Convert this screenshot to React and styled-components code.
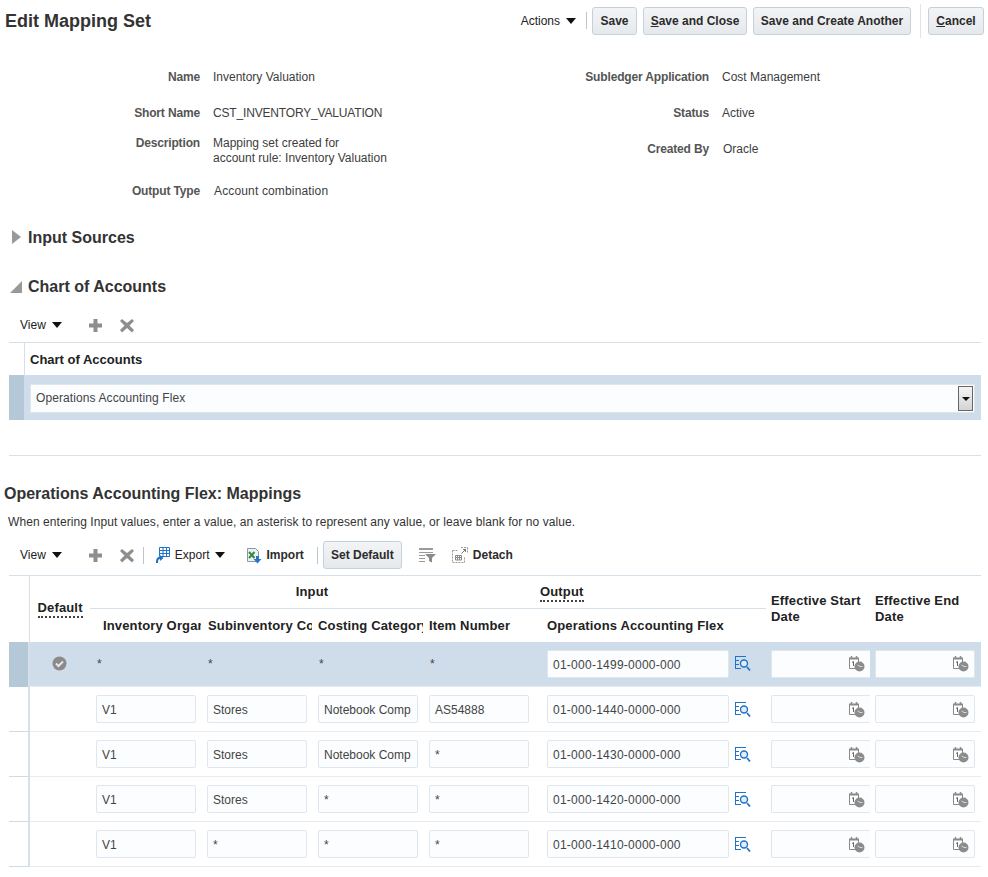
import React from 'react'
import styled, { createGlobalStyle } from 'styled-components'

const GlobalStyle = createGlobalStyle`
  html, body {
    margin: 0;
    padding: 0;
    background: #fff;
    overflow: hidden;
  }
  body {
    font-family: "Liberation Sans", Arial, sans-serif;
    font-size: 12px;
    color: #333;
  }
`

const Page = styled.div`
  width: 988px;
  height: 877px;
  overflow: hidden;
`

/* page header */
const Header = styled.div`
  display: flex;
  align-items: center;
  height: 40px;
  padding: 1px 4px 0 5px;
  box-sizing: border-box;
`

const Title = styled.h1`
  flex: 1;
  margin: 0;
  font-size: 18px;
  line-height: 20px;
  font-weight: bold;
  color: #333;
`

const Menu = styled.span`
  display: inline-flex;
  align-items: center;
  gap: 6px;
  color: #222;
`

const Caret = styled.span`
  display: inline-block;
  width: 0;
  height: 0;
  margin-left: ${p => p.$ml || 0}px;
  border-left: 5px solid transparent;
  border-right: 5px solid transparent;
  border-top: 6px solid #111;
`

const Divider = styled.span`
  display: block;
  width: 1px;
  height: ${p => p.$h || 17}px;
  background: ${p => p.$light ? '#dfe5ea' : '#b9c6d2'};
  margin-left: ${p => p.$ml || 0}px;
  margin-right: ${p => p.$mr || 0}px;
`

const Button = styled.button`
  height: 28px;
  margin-left: ${p => p.$ml || 0}px;
  padding: 0;
  width: ${p => p.$w}px;
  font: bold 12px "Liberation Sans", Arial, sans-serif;
  color: #2b2b2b;
  border: 1px solid #c5d0da;
  border-radius: 3px;
  background: linear-gradient(#f2f4f6, #e6e9ec);
  u { text-decoration: underline; }
`

/* read only form */
const Form = styled.div`
  display: grid;
  grid-template-columns: 509px 1fr;
  padding-top: 30px;
  height: 160px;
`

const Column = styled.div`
  display: flex;
  flex-direction: column;
`

const Field = styled.div`
  display: grid;
  grid-template-columns: ${p => p.$label}px 1fr;
  column-gap: ${p => p.$gap || 13}px;
  margin-top: ${p => p.$top || 0}px;
  line-height: 15px;
`

const Label = styled.div`
  text-align: right;
  font-weight: bold;
  letter-spacing: -0.15px;
  color: #555;
`

const Value = styled.div`
  position: relative;
  color: #3d3d3d;
  letter-spacing: ${p => p.$track || 0}px;
`

const Grip = styled.span`
  position: absolute;
  left: 164px;
  top: 27px;
  width: 8px;
  height: 5px;
  background-image: radial-gradient(#b5b5b5 40%, transparent 45%);
  background-size: 2px 2px;
`

/* collapsible sections */
const Section = styled.div`
  display: flex;
  align-items: center;
  height: 20px;
  margin-top: ${p => p.$top}px;
  font-size: 16px;
  font-weight: bold;
  color: #333;
`

const Disclosure = styled.span`
  width: 28px;
  display: flex;
  padding-left: ${p => p.$open ? 10 : 12}px;
  box-sizing: border-box;
`

const ClosedArrow = styled.span`
  width: 0;
  height: 0;
  border-top: 7px solid transparent;
  border-bottom: 7px solid transparent;
  border-left: 9px solid #999;
  margin-top: -3px;
`

const OpenArrow = styled.span`
  width: 0;
  height: 0;
  border-left: 12px solid transparent;
  border-bottom: 12px solid #999;
  margin-top: -1px;
`

/* toolbars */
const Toolbar = styled.div`
  display: flex;
  align-items: center;
  height: 28px;
  margin-top: ${p => p.$top}px;
  padding-left: 20px;
  color: #222;
`

const ToolText = styled.span`
  margin-left: ${p => p.$ml || 0}px;
  font-weight: ${p => p.$bold ? 'bold' : 'normal'};
  color: ${p => p.$bold ? '#2b2b2b' : '#222'};
`

const ToolIcon = styled.svg`
  display: block;
  flex: none;
  margin-left: ${p => p.$ml || 0}px;
`

/* chart of accounts table */
const ChartTable = styled.div`
  margin: 3px 7px 0 9px;
  border-top: 1px solid #d6e0e8;
`

const ChartHead = styled.div`
  height: 32px;
  margin-left: 15px;
  padding-left: 5px;
  border-left: 1px solid #d6e0e8;
  display: flex;
  align-items: center;
  font-size: 13px;
  font-weight: bold;
  color: #222;
`

const ChartRow = styled.div`
  display: flex;
  height: 45px;
  background: #cfdcea;
`

const RowMarker = styled.div`
  flex: none;
  width: 15px;
  background: #b4c8d8;
`

const ChoiceBox = styled.div`
  flex: 1;
  height: 27px;
  margin: 9px 6px 0 6px;
  padding-left: 5px;
  background: #fbfdff;
  border: 1px solid #dfe7ee;
  display: flex;
  align-items: center;
  justify-content: space-between;
  color: #444;
`

const ChoiceText = styled.span`
  padding-bottom: 2px;
  letter-spacing: 0.1px;
`

const ChoiceButton = styled.span`
  width: 15px;
  height: 25px;
  border: 1px solid #666;
  box-sizing: border-box;
  background: linear-gradient(#f4f4f4, #d4d4d4);
  display: flex;
  align-items: center;
  justify-content: center;
  margin-right: 1px;
`

const SmallCaret = styled.span`
  width: 0;
  height: 0;
  border-left: 4px solid transparent;
  border-right: 4px solid transparent;
  border-top: 4px solid #111;
`

const Rule = styled.div`
  margin: 35px 7px 0 9px;
  border-top: 1px solid #d9e1e8;
`

const MappingsTitle = styled.h2`
  margin: 28px 0 0 4px;
  font-size: 16px;
  line-height: 20px;
  font-weight: bold;
  color: #333;
`

const Hint = styled.p`
  margin: 11px 0 0 8px;
  line-height: 15px;
  letter-spacing: 0.07px;
  color: #333;
`

/* mappings table */
const Table = styled.table`
  width: 972px;
  margin: 6px 0 0 9px;
  border-collapse: collapse;
  table-layout: fixed;
  border-top: 1px solid #d6e0e8;
`

const HeadCell = styled.th`
  box-sizing: border-box;
  padding: ${p => p.$top || 0}px 0 ${p => p.$bottom || 0}px ${p => p.$pad || 0}px;
  height: 33px;
  text-align: ${p => p.$align || 'left'};
  font-size: 13px;
  line-height: 16px;
  font-weight: bold;
  letter-spacing: 0.15px;
  color: #222;
  white-space: ${p => p.$wrap ? 'normal' : 'nowrap'};
  overflow: hidden;
  border-bottom: ${p => p.$line ? '1px solid #d6e0e8' : 'none'};
  border-left: ${p => p.$edge ? '1px solid #d6e0e8' : 'none'};
`

const Dotted = styled.span`
  border-bottom: 2px dotted #444;
  padding-bottom: 1px;
`

const Row = styled.tr`
  height: 45px;
  background: ${p => p.$selected ? '#cfdcea' : 'transparent'};
`

const Cell = styled.td`
  padding: 0 0 0 ${p => p.$pad ?? 6}px;
  border-bottom: 1px solid #e8ecf0;
  border-left: ${p => p.$edge ? '2px solid #d6e0e8' : 'none'};
  overflow: hidden;
  vertical-align: middle;
`

const MarkerCell = styled.td`
  padding: 0;
  background: ${p => p.$selected ? '#b4c8d8' : 'transparent'};
  border-bottom: 1px solid ${p => p.$selected ? '#b4c8d8' : '#cfdae4'};
`

const Check = styled.svg`
  display: block;
  margin: 0 auto 0 22px;
`

const Plain = styled.span`
  display: block;
  padding: 1px 0 0 1px;
  color: #444;
`

const Input = styled.div`
  box-sizing: border-box;
  width: ${p => p.$w}px;
  height: 28px;
  padding: 2px 0 0 5px;
  display: flex;
  align-items: center;
  justify-content: space-between;
  background: #fbfdff;
  border: 1px solid #dfe6ed;
  border-right: ${p => p.$cut ? 'none' : '1px solid #dfe6ed'};
  border-radius: ${p => p.$cut ? '2px 0 0 2px' : '2px'};
  letter-spacing: ${p => p.$track || 0}px;
  color: #444;
  white-space: nowrap;
  overflow: hidden;
  flex: none;
`

const OutputWrap = styled.div`
  display: flex;
  align-items: center;
  gap: 5px;
`

const AddIcon = () => (
  <ToolIcon $ml={26} width="15" height="15" viewBox="0 0 15 15">
    <path d="M5.5 1h4v4.500H14v4H9.500V14h-4V9.500H1v-4h4.500z" fill="#8e8e8e" />
  </ToolIcon>
)

const DeleteIcon = () => (
  <ToolIcon $ml={16} width="16" height="15" viewBox="0 0 16 15">
    <path d="M3 1l5 4 5-4 2 2-4.500 4.500L15 12l-2 2.500-5-4.500-5 4.500L1 12l4.500-4.500L1 3z" fill="#8e8e8e" />
  </ToolIcon>
)

const ExportIcon = () => (
  <ToolIcon $ml={11} width="16" height="18" viewBox="0 0 16 18">
    <path d="M4.500 1.500h10v9h-10zM4.500 4.500h10M4.500 7.500h10M8 1.500v9M11.500 1.500v9" fill="none" stroke="#1f73c9" />
    <path d="M1 17c0-4 1-6 4-6.500V9l3.500 3L5 15v-2c-1.500 0-2 1.500-2 4z" fill="#1f73c9" />
  </ToolIcon>
)

const ImportIcon = () => (
  <ToolIcon $ml={21} width="16" height="17" viewBox="0 0 16 17">
    <path d="M1.500 1.500h8l3 3v10h-11z" fill="#eef1f4" stroke="#8b97a3" />
    <path d="M3 5l5.500 6M8.500 5L3 11" stroke="#2f8d3f" strokeWidth="2" />
    <path d="M10 9h3v3h2.500l-4 4.500-4-4.500H10z" fill="#2a74c4" />
  </ToolIcon>
)

const FilterIcon = () => (
  <ToolIcon $ml={16} width="18" height="16" viewBox="0 0 18 16">
    <path d="M1 1h14v2H1zM1 5h14v1H1zM1 8h6v1H1zM1 11h6v1H1zM1 14h6v1H1z" fill="#9a9a9a" />
    <path d="M7 7h11l-4 4v4.500l-3-1.500v-3z" fill="#8a8a8a" />
  </ToolIcon>
)

const DetachIcon = () => (
  <ToolIcon $ml={16} width="16" height="16" viewBox="0 0 16 16">
    <path d="M.5 3.500v12h12v-6M.5 3.500h6" fill="none" stroke="#9a9a9a" strokeDasharray="2 1" />
    <path d="M9 .5h6.500M15.500.5v6" fill="none" stroke="#9a9a9a" strokeDasharray="2 1" />
    <path d="M9.500 6.500l4-4M11 2.500h2.500V5" fill="none" stroke="#777" />
    <path d="M3.500 8.500h6v4.500h-6zM3.500 10.500h6M5.500 8.500v4.500M7.500 8.500v4.500" fill="none" stroke="#8a8a8a" />
  </ToolIcon>
)

const LookupIcon = () => (
  <svg width="17" height="17" viewBox="0 0 17 17" style={{ flex: 'none' }}>
    <path d="M1 1.500h11M1.500 1v12M1 5.500h4M1 9.500h4M1 13.500h6" stroke="#1f73c9" fill="none" />
    <circle cx="10" cy="8.500" r="3.500" fill="#e4eef8" stroke="#1f73c9" strokeWidth="1.400" />
    <path d="M13 12l3 3.500" stroke="#1f73c9" strokeWidth="1.800" />
  </svg>
)

const DateIcon = () => (
  <svg width="17" height="17" viewBox="0 0 17 17" style={{ flex: 'none', margin: '0 5px 2px 0' }}>
    <path d="M1.500 3.500h9v10h-9z" fill="#fff" stroke="#8a8a8a" />
    <path d="M1 3.500h10" stroke="#8a8a8a" strokeWidth="2" />
    <path d="M3.500 1v2M8.500 1v2" stroke="#8a8a8a" strokeWidth="1.500" />
    <path d="M4 7.500l1.500-1V11" fill="none" stroke="#666" />
    <circle cx="11.500" cy="11.500" r="5" fill="#8c8c8c" />
    <path d="M9.500 10l2.500 1.500h2.500" fill="none" stroke="#d8d8d8" />
  </svg>
)

const mappings = [
  { org: 'V1', sub: 'Stores', cat: 'Notebook Comp', item: 'AS54888', flex: '01-000-1440-0000-000' },
  { org: 'V1', sub: 'Stores', cat: 'Notebook Comp', item: '*', flex: '01-000-1430-0000-000' },
  { org: 'V1', sub: 'Stores', cat: '*', item: '*', flex: '01-000-1420-0000-000' },
  { org: 'V1', sub: '*', cat: '*', item: '*', flex: '01-000-1410-0000-000' },
]

const OutputCell = ({ value }) => (
  <Cell $pad={13}>
    <OutputWrap>
      <Input $w={182} $track={0.25}>{value}</Input>
      <LookupIcon />
    </OutputWrap>
  </Cell>
)

const DateCells = () => (
  <>
    <Cell $pad={5}>
      <Input $w={99} $cut><span />
        <DateIcon />
      </Input>
    </Cell>
    <Cell $pad={5}>
      <Input $w={100}><span />
        <DateIcon />
      </Input>
    </Cell>
  </>
)

export default function App () {
  return (
    <Page>
      <GlobalStyle />
      <Header>
        <Title>Edit Mapping Set</Title>
        <Menu>Actions <Caret /></Menu>
        <Divider $ml={10} />
        <Button $ml={5} $w={45}>Save</Button>
        <Button $ml={6} $w={104}><u>S</u>ave and Close</Button>
        <Button $ml={6} $w={158}>Save and Create Another</Button>
        <Divider $light $h={34} $ml={9} />
        <Button $ml={7} $w={56}><u>C</u>ancel</Button>
      </Header>

      <Form>
        <Column>
          <Field $label={200}><Label>Name</Label><Value>Inventory Valuation</Value></Field>
          <Field $label={200} $top={21}><Label>Short Name</Label><Value $track={-0.17}>CST_INVENTORY_VALUATION</Value></Field>
          <Field $label={200} $top={15}>
            <Label>Description</Label>
            <Value>Mapping set created for<br />account rule: Inventory Valuation<Grip /></Value>
          </Field>
          <Field $label={200} $top={18} $gap={14}><Label>Output Type</Label><Value $track={0.15}>Account combination</Value></Field>
        </Column>
        <Column>
          <Field $label={200}><Label>Subledger Application</Label><Value>Cost Management</Value></Field>
          <Field $label={200} $top={21}><Label>Status</Label><Value>Active</Value></Field>
          <Field $label={200} $top={21} $gap={14}><Label>Created By</Label><Value>Oracle</Value></Field>
        </Column>
      </Form>

      <Section $top={-2}>
        <Disclosure><ClosedArrow /></Disclosure>
        Input Sources
      </Section>
      <Section $top={29}>
        <Disclosure $open><OpenArrow /></Disclosure>
        Chart of Accounts
      </Section>

      <Toolbar $top={14}>
        <Menu>View <Caret /></Menu>
        <AddIcon />
        <DeleteIcon />
      </Toolbar>
      <ChartTable>
        <ChartHead>Chart of Accounts</ChartHead>
        <ChartRow>
          <RowMarker />
          <ChoiceBox>
            <ChoiceText>Operations Accounting Flex</ChoiceText>
            <ChoiceButton><SmallCaret /></ChoiceButton>
          </ChoiceBox>
        </ChartRow>
      </ChartTable>

      <Rule />
      <MappingsTitle>Operations Accounting Flex: Mappings</MappingsTitle>
      <Hint>When entering Input values, enter a value, an asterisk to represent any value, or leave blank for no value.</Hint>

      <Toolbar $top={11}>
        <Menu>View <Caret /></Menu>
        <AddIcon />
        <DeleteIcon />
        <Divider $ml={8} />
        <ExportIcon />
        <ToolText $ml={4}>Export</ToolText>
        <Caret $ml={6} />
        <ImportIcon />
        <ToolText $ml={4} $bold>Import</ToolText>
        <Divider $ml={13} $mr={5} />
        <Button $w={79}>Set Default</Button>
        <FilterIcon />
        <DetachIcon />
        <ToolText $ml={5} $bold>Detach</ToolText>
      </Toolbar>

      <Table>
        <colgroup>
          <col style={{ width: 20 }} />
          <col style={{ width: 61 }} />
          <col style={{ width: 111 }} />
          <col style={{ width: 111 }} />
          <col style={{ width: 111 }} />
          <col style={{ width: 111 }} />
          <col style={{ width: 232 }} />
          <col style={{ width: 104 }} />
          <col style={{ width: 111 }} />
        </colgroup>
        <thead>
          <tr>
            <HeadCell rowSpan={2} />
            <HeadCell rowSpan={2} $edge $pad={8} $bottom={2}><Dotted>Default</Dotted></HeadCell>
            <HeadCell colSpan={4} $align="center" $line>Input</HeadCell>
            <HeadCell $pad={6} $line><Dotted>Output</Dotted></HeadCell>
            <HeadCell rowSpan={2} $wrap $pad={5}>Effective Start Date</HeadCell>
            <HeadCell rowSpan={2} $wrap $pad={5}>Effective End Date</HeadCell>
          </tr>
          <tr>
            <HeadCell $pad={13} $top={1}>Inventory Organization</HeadCell>
            <HeadCell $pad={7} $top={1}>Subinventory Code</HeadCell>
            <HeadCell $pad={6} $top={1}>Costing Category</HeadCell>
            <HeadCell $pad={6} $top={1}>Item Number</HeadCell>
            <HeadCell $pad={13} $top={1}>Operations Accounting Flex</HeadCell>
          </tr>
        </thead>
        <tbody>
          <Row $selected>
            <MarkerCell $selected />
            <Cell $pad={0} $edge>
              <Check width="15" height="15" viewBox="0 0 15 15">
                <circle cx="7.500" cy="7.500" r="7" fill="#8a8a8a" />
                <path d="M4 7.500l2.500 2.500 4.500-4.500" fill="none" stroke="#e6e6e6" strokeWidth="2" />
              </Check>
            </Cell>
            <Cell><Plain>*</Plain></Cell>
            <Cell><Plain>*</Plain></Cell>
            <Cell><Plain>*</Plain></Cell>
            <Cell><Plain>*</Plain></Cell>
            <OutputCell value="01-000-1499-0000-000" />
            <DateCells />
          </Row>
          {mappings.map(m => (
            <Row key={m.flex}>
              <MarkerCell />
              <Cell $pad={0} $edge />
              <Cell><Input $w={100}>{m.org}</Input></Cell>
              <Cell><Input $w={100}>{m.sub}</Input></Cell>
              <Cell><Input $w={100}>{m.cat}</Input></Cell>
              <Cell><Input $w={100}>{m.item}</Input></Cell>
              <OutputCell value={m.flex} />
              <DateCells />
            </Row>
          ))}
        </tbody>
      </Table>
    </Page>
  )
}
